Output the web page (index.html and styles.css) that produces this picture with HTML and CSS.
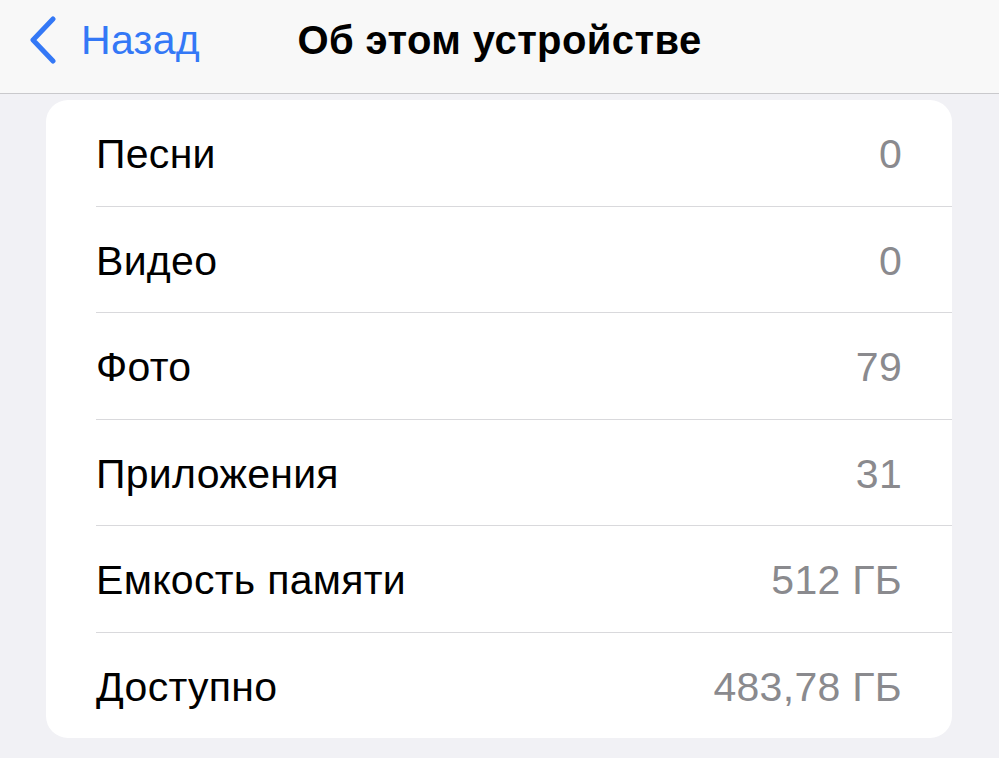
FILE: index.html
```html
<!DOCTYPE html>
<html lang="ru">
<head>
  <meta charset="UTF-8" />
  <title>Об этом устройстве</title>
  <link rel="stylesheet" href="styles.css">
</head>
<body>
  <div class="navbar">
    <a class="back" href="#">
      <svg class="chevron" width="30" height="48" viewBox="0 0 30 48">
        <path d="M25 3 L5 24 L25 45" fill="none" stroke="#3478f6" stroke-width="5" stroke-linecap="round" stroke-linejoin="round"/>
      </svg>
      <span>Назад</span>
    </a>
    <h1 class="title">Об этом устройстве</h1>
  </div>

  <div class="card">
    <div class="row"><span class="label">Песни</span><span class="value">0</span></div>
    <div class="row"><span class="label">Видео</span><span class="value">0</span></div>
    <div class="row"><span class="label">Фото</span><span class="value">79</span></div>
    <div class="row"><span class="label">Приложения</span><span class="value">31</span></div>
    <div class="row"><span class="label">Емкость памяти</span><span class="value">512 ГБ</span></div>
    <div class="row"><span class="label">Доступно</span><span class="value">483,78 ГБ</span></div>
  </div>
</body>
</html>
```

FILE: styles.css
```css
body {
  margin: 0;
  height: 758px;
  font-family: "Liberation Sans", Arial, sans-serif;
  background-color: #f1f1f5;
  overflow: hidden;
}
.navbar {
  position: relative;
  height: 93px;
  background-color: #f8f8f8;
  border-bottom: 1px solid #c9c9cc;
  display: flex;
  align-items: center;
}
.back {
  display: flex;
  align-items: center;
  gap: 23px;
  margin-left: 28px;
  margin-top: -13px;
  color: #3478f6;
  text-decoration: none;
  font-size: 41px;
  letter-spacing: 0.3px;
}
.title {
  position: absolute;
  left: 0;
  right: 0;
  top: 0;
  margin: 0;
  line-height: 80px;
  text-align: center;
  font-size: 40px;
  font-weight: bold;
  letter-spacing: 0.4px;
  color: #000;
  pointer-events: none;
}
.card {
  margin: 6px 47px 0 46px;
  background-color: #fff;
  border-radius: 22px;
  overflow: hidden;
}
.row {
  box-sizing: border-box;
  margin-left: 50px;
  padding: 4px 50px 0 0;
  height: 106.5px;
  display: flex;
  align-items: center;
  justify-content: space-between;
  border-bottom: 1px solid #d9d9dc;
  font-size: 41px;
  letter-spacing: 0.3px;
}
.row:last-child {
  height: 105.5px;
  border-bottom: none;
}
.label {
  color: #000;
}
.value {
  color: #8a8a8e;
}
```
